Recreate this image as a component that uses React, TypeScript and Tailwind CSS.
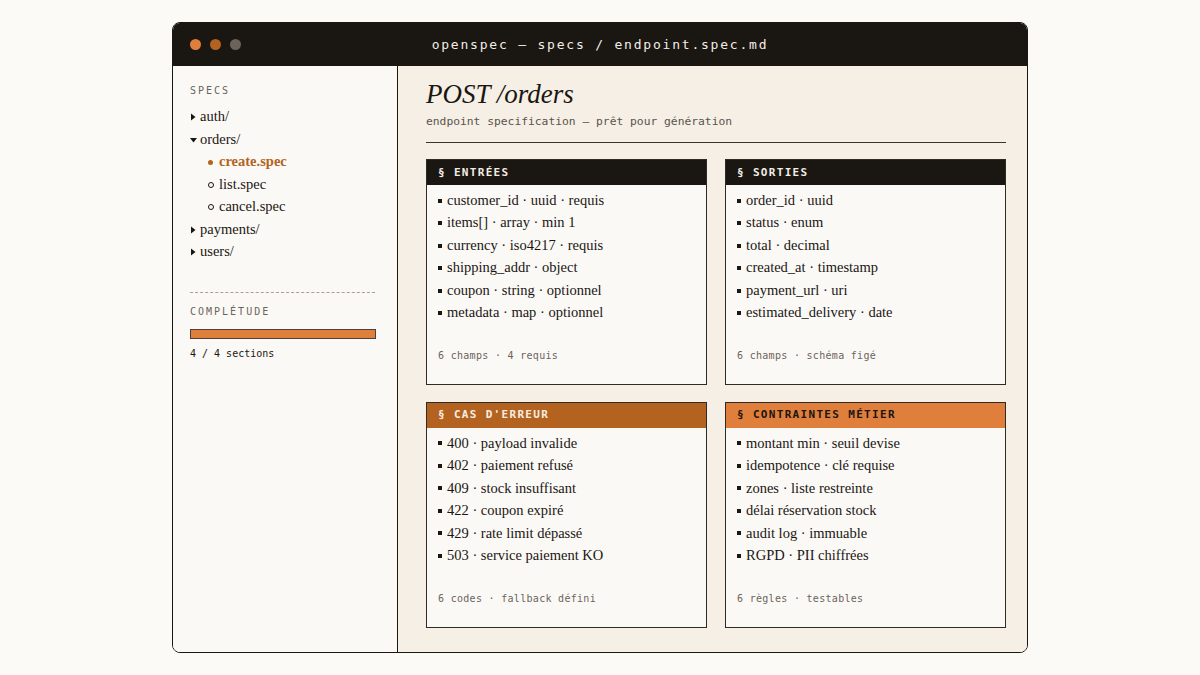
import React from "react";

const mono = { fontFamily: '"DejaVu Sans Mono", "Liberation Mono", monospace' };
const serif = { fontFamily: '"Liberation Serif", "DejaVu Serif", serif' };

type Card = {
  title: string;
  head: string;
  headText: string;
  items: string[];
  footer: string;
};

const cards: Card[] = [
  {
    title: "§ ENTRÉES",
    head: "bg-[#1a1612]",
    headText: "text-[#f3ede4]",
    items: [
      "customer_id · uuid · requis",
      "items[] · array · min 1",
      "currency · iso4217 · requis",
      "shipping_addr · object",
      "coupon · string · optionnel",
      "metadata · map · optionnel",
    ],
    footer: "6 champs · 4 requis",
  },
  {
    title: "§ SORTIES",
    head: "bg-[#1a1612]",
    headText: "text-[#f3ede4]",
    items: [
      "order_id · uuid",
      "status · enum",
      "total · decimal",
      "created_at · timestamp",
      "payment_url · uri",
      "estimated_delivery · date",
    ],
    footer: "6 champs · schéma figé",
  },
  {
    title: "§ CAS D'ERREUR",
    head: "bg-[#b3631f]",
    headText: "text-[#f6eee4]",
    items: [
      "400 · payload invalide",
      "402 · paiement refusé",
      "409 · stock insuffisant",
      "422 · coupon expiré",
      "429 · rate limit dépassé",
      "503 · service paiement KO",
    ],
    footer: "6 codes · fallback défini",
  },
  {
    title: "§ CONTRAINTES MÉTIER",
    head: "bg-[#df7f3b]",
    headText: "text-[#1a1612]",
    items: [
      "montant min · seuil devise",
      "idempotence · clé requise",
      "zones · liste restreinte",
      "délai réservation stock",
      "audit log · immuable",
      "RGPD · PII chiffrées",
    ],
    footer: "6 règles · testables",
  },
];

function Tri({ down }: { down?: boolean }) {
  return (
    <svg width="7" height="8" viewBox="0 0 7 8" className="mr-[3px]">
      {down ? (
        <polygon points="0,2 7,2 3.5,6.5" fill="#1a1612" />
      ) : (
        <polygon points="1,0.5 5.5,4 1,7.5" fill="#1a1612" />
      )}
    </svg>
  );
}

function SpecCard({ c }: { c: Card }) {
  return (
    <div className="flex flex-col border-[1.5px] border-[#2e2a26] bg-[#fbf9f6] min-h-0">
      <div
        className={`h-[25px] flex items-center px-[11px] text-[11px] font-bold tracking-[0.12em] ${c.head} ${c.headText}`}
        style={mono}
      >
        {c.title}
      </div>
      <div className="flex flex-col pt-[4px] px-[11px]" style={serif}>
        {c.items.map((it) => (
          <div key={it} className="flex items-center h-[22.5px] text-[14.5px] text-[#1a1612]">
            <span className="w-[4px] h-[4px] bg-[#1a1612] mr-[5px] shrink-0" />
            {it}
          </div>
        ))}
      </div>
      <div className="mt-auto pb-[21px] px-[11px] text-[10px] text-[#6b645c] tracking-[0.03em]" style={mono}>
        {c.footer}
      </div>
    </div>
  );
}

export default function App() {
  return (
    <div className="w-[1200px] h-[675px] bg-[#fbfaf7] flex items-start justify-center pt-[22px]">
      <div className="w-[856px] h-[631px] flex flex-col rounded-[8px] border-[1.5px] border-[#1a1612] overflow-hidden">
        <div className="h-[43px] shrink-0 bg-[#1a1612] flex items-center relative pl-[17px] pr-[16px]">
          <div className="flex gap-[9px]">
            <span className="w-[11px] h-[11px] rounded-full bg-[#df7f3b]" />
            <span className="w-[11px] h-[11px] rounded-full bg-[#b3631f]" />
            <span className="w-[11px] h-[11px] rounded-full bg-[#6b645c]" />
          </div>
          <div
            className="absolute inset-0 flex items-center justify-center text-[13px] tracking-[0.138em] text-[#f3ede4]"
            style={mono}
          >
            openspec — specs / endpoint.spec.md
          </div>
        </div>
        <div className="flex flex-1 min-h-0">
          <div className="w-[225px] shrink-0 bg-[#fbf9f5] border-r-[1.5px] border-[#1a1612] pl-[17px] pr-[22px] pt-[17px]">
            <div className="text-[10px] tracking-[0.2em] text-[#6b645c] mb-[8px]" style={mono}>
              SPECS
            </div>
            <div className="flex flex-col text-[14.5px] text-[#1a1612]" style={serif}>
              <div className="h-[22.5px] flex items-center">
                <Tri />auth/
              </div>
              <div className="h-[22.5px] flex items-center">
                <Tri down />orders/
              </div>
              <div className="h-[22.5px] flex items-center pl-[18px] text-[#b3631f] font-bold">
                <span className="w-[5px] h-[5px] rounded-full bg-[#b3631f] mr-[6px]" />create.spec
              </div>
              <div className="h-[22.5px] flex items-center pl-[18px]">
                <span className="w-[6px] h-[6px] rounded-full border border-[#1a1612] mr-[5px]" />list.spec
              </div>
              <div className="h-[22.5px] flex items-center pl-[18px]">
                <span className="w-[6px] h-[6px] rounded-full border border-[#1a1612] mr-[5px]" />cancel.spec
              </div>
              <div className="h-[22.5px] flex items-center">
                <Tri />payments/
              </div>
              <div className="h-[22.5px] flex items-center">
                <Tri />users/
              </div>
            </div>
            <div className="mt-[28px] border-t border-dashed border-[#a8a097]" />
            <div className="mt-[11px] text-[10px] tracking-[0.2em] text-[#6b645c]" style={mono}>
              COMPLÉTUDE
            </div>
            <div className="mt-[10px] h-[10px] w-[186px] bg-[#df7f3b] border border-[#4a423a]" />
            <div className="mt-[7px] text-[10px] text-[#1a1612]" style={mono}>
              4 / 4 sections
            </div>
          </div>
          <div className="flex-1 bg-[#f5efe6] flex flex-col pl-[28px] pr-[21px] pt-[11px] pb-[24px] min-h-0">
            <div className="text-[27px] italic text-[#1a1612] leading-[34px]" style={serif}>
              POST /orders
            </div>
            <div className="mt-[3px] text-[11.3px] text-[#5a534c]" style={mono}>
              endpoint specification — prêt pour génération
            </div>
            <div className="mt-[11px] h-[1.5px] bg-[#3a3530]" />
            <div className="mt-[16px] flex-1 grid grid-cols-2 grid-rows-2 gap-x-[18px] gap-y-[17px] min-h-0">
              {cards.map((c) => (
                <SpecCard key={c.title} c={c} />
              ))}
            </div>
          </div>
        </div>
      </div>
    </div>
  );
}
